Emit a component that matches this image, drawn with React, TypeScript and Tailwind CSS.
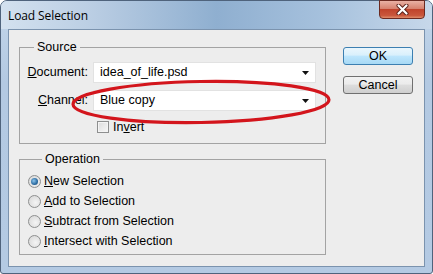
export default function App() {
  const ops = [
    { key: "N", rest: "ew Selection", checked: true },
    { key: "A", rest: "dd to Selection", checked: false },
    { key: "S", rest: "ubtract from Selection", checked: false },
    { key: "I", rest: "ntersect with Selection", checked: false },
  ]

  return (
    <div className="relative w-[433px] h-[274px] bg-white overflow-hidden font-['Liberation_Sans',Arial,sans-serif] text-[12.5px] text-black">
      <div className="h-full flex flex-col rounded-t-[7px] rounded-b-[3px] border border-[#4f637c] bg-[linear-gradient(to_bottom,#c3d6ea,#b3c9e2_30%,#b4cae3)] px-[7px] pb-[6px]">
        {/* title bar */}
        <div className="h-[28px] flex justify-between bg-[linear-gradient(to_right,#d3e1ef,#bccfe4_20%,#8fafd0_50%,#a6c1dd_75%,#c7d8ea)] -mx-[7px] px-[7px] rounded-t-[6px]">
          <span className="self-center mt-[1px] text-[12px] text-black font-['Open_Sans',sans-serif] tracking-[-0.1px]">Load Selection</span>
          <div className="w-[46px] h-[19px] -mt-[1px] rounded-b-[4px] border border-[#6b2a21] bg-[linear-gradient(to_bottom,#e9b1a4,#d6826f_45%,#c0432c_50%,#c9573c_85%,#df8d6c)] flex items-center justify-center">
            <svg width="13" height="11" viewBox="0 0 13 11">
              <path d="M2.5 1.5 L10.5 9.5 M10.5 1.5 L2.5 9.5" stroke="#5a2018" strokeWidth="4" strokeLinecap="round" />
              <path d="M2.5 1.5 L10.5 9.5 M10.5 1.5 L2.5 9.5" stroke="#ffffff" strokeWidth="2.2" strokeLinecap="round" />
            </svg>
          </div>
        </div>

        {/* client area */}
        <div className="flex-1 flex items-start border border-[#7b93ae] bg-[#ededed] pl-[10px] pt-[10px]">
          <div className="flex flex-col">
            <fieldset className="w-[307px] border border-[#a3a3a3] pb-[10px]">
              <legend className="ml-[14px] px-[3px] leading-[14px]">Source</legend>
              <div className="flex items-center mt-[8px]">
                <span className="w-[68px] text-right">
                  <u>D</u>ocument:
                </span>
                <Dropdown value="idea_of_life.psd" />
              </div>
              <div className="flex items-center mt-[7px]">
                <span className="w-[68px] text-right">
                  <u>C</u>hannel:
                </span>
                <Dropdown value="Blue copy" />
              </div>
              <div className="flex items-center h-[12px] mt-[10px] pl-[77px]">
                <span className="w-[12px] h-[12px] border border-[#8e8f8f] bg-[linear-gradient(135deg,#dcdcdc,#f7f7f7)] shadow-[inset_0_0_0_1px_#f4f4f4]" />
                <span className="ml-[4px]">
                  In<u>v</u>ert
                </span>
              </div>
            </fieldset>

            <fieldset className="w-[307px] mt-[8px] border border-[#a3a3a3] pt-[5px] pb-[3px] pl-[8px]">
              <legend className="ml-[14px] px-[3px] leading-[14px]">Operation</legend>
              {ops.map((op) => (
                <div key={op.key} className="flex items-center h-[20px]">
                  <Radio checked={op.checked} />
                  <span className="ml-[3px]">
                    <u>{op.key}</u>
                    {op.rest}
                  </span>
                </div>
              ))}
            </fieldset>
          </div>

          <div className="flex flex-col ml-[17px] mt-[7px]">
            <button className="w-[70px] h-[18px] rounded-[3px] border border-[#3c7fb1] bg-[linear-gradient(to_bottom,#eaf6fd,#d9f0fc_45%,#bee6fd_50%,#a7d9f5)] leading-none">
              OK
            </button>
            <button className="w-[70px] h-[18px] mt-[11px] rounded-[3px] border border-[#707070] bg-[linear-gradient(to_bottom,#f2f2f2,#ebebeb_45%,#dddddd_50%,#cfcfcf)] leading-none">
              Cancel
            </button>
          </div>
        </div>
      </div>

      {/* red annotation ring */}
      <svg className="absolute left-0 top-0 pointer-events-none" width="433" height="274">
        <ellipse cx="201" cy="102" rx="128" ry="20.5" fill="none" stroke="#d3151c" strokeWidth="3.2" transform="rotate(-1 201 102)" />
      </svg>
    </div>
  )
}

function Dropdown({ value }: { value: string }) {
  return (
    <div className="ml-[5px] w-[223px] h-[21px] flex items-center justify-between bg-white border border-[#e2e2e2] pl-[6px] pr-[6px]">
      <span>{value}</span>
      <svg width="7" height="4" viewBox="0 0 7 4">
        <path d="M0 0 H7 L3.5 4 Z" fill="#111" />
      </svg>
    </div>
  )
}

function Radio({ checked }: { checked: boolean }) {
  return (
    <span className="w-[13px] h-[13px] rounded-full border border-[#8e8f8f] bg-[radial-gradient(circle_at_60%_60%,#f4f4f4,#d4d4d4)] flex items-center justify-center">
      {checked && (
        <span className="w-[7px] h-[7px] rounded-full bg-[radial-gradient(circle_at_40%_40%,#8cc4ec,#2a6aa0_60%,#1c4c78)]" />
      )}
    </span>
  )
}
